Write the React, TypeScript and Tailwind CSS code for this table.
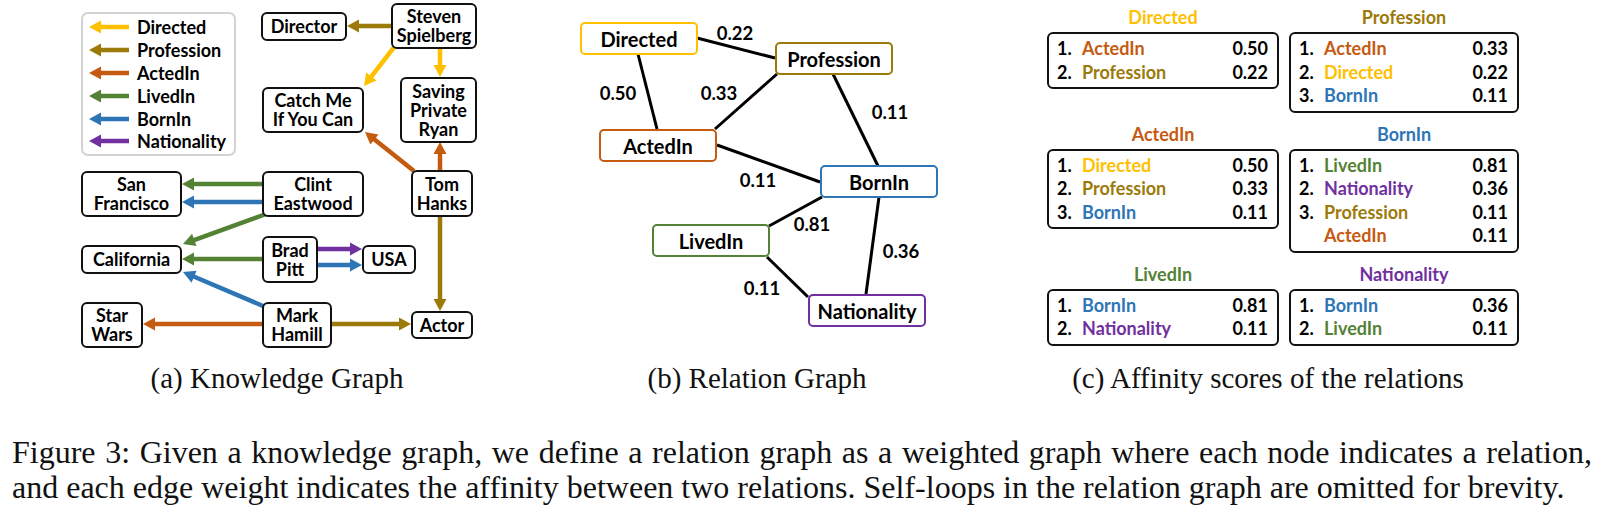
import React from 'react';

const C = {
  directed: '#FFC000',
  profession: '#9C7A0A',
  acted: '#C55A11',
  lived: '#548235',
  born: '#2E75B6',
  nat: '#7030A0',
};

type ArrowProps = { x1: number; y1: number; x2: number; y2: number; color: string };

function Arrow({ x1, y1, x2, y2, color }: ArrowProps) {
  const hl = 12;
  const hw = 6.5;
  const dx = x2 - x1;
  const dy = y2 - y1;
  const L = Math.hypot(dx, dy);
  const ux = dx / L;
  const uy = dy / L;
  const bx = x2 - ux * hl;
  const by = y2 - uy * hl;
  const px = -uy;
  const py = ux;
  return (
    <g>
      <line x1={x1} y1={y1} x2={bx + ux} y2={by + uy} stroke={color} strokeWidth={4.5} />
      <polygon
        points={`${x2},${y2} ${bx + px * hw},${by + py * hw} ${bx - px * hw},${by - py * hw}`}
        fill={color}
      />
    </g>
  );
}

const kgArrows: ArrowProps[] = [
  { x1: 391, y1: 26, x2: 347, y2: 26, color: C.profession },
  { x1: 395, y1: 46, x2: 364, y2: 86, color: C.directed },
  { x1: 440, y1: 48, x2: 440, y2: 77, color: C.directed },
  { x1: 414, y1: 171, x2: 365, y2: 132, color: C.acted },
  { x1: 440, y1: 170, x2: 440, y2: 142, color: C.acted },
  { x1: 440, y1: 216, x2: 440, y2: 311, color: C.profession },
  { x1: 262, y1: 184, x2: 182, y2: 184, color: C.lived },
  { x1: 262, y1: 202, x2: 182, y2: 202, color: C.born },
  { x1: 266, y1: 214, x2: 183, y2: 244, color: C.lived },
  { x1: 262, y1: 259, x2: 182, y2: 259, color: C.lived },
  { x1: 318, y1: 249, x2: 362, y2: 249, color: C.nat },
  { x1: 318, y1: 265, x2: 362, y2: 265, color: C.born },
  { x1: 263, y1: 306, x2: 183, y2: 272, color: C.born },
  { x1: 262, y1: 324, x2: 143, y2: 324, color: C.acted },
  { x1: 332, y1: 324, x2: 411, y2: 324, color: C.profession },
];

const kgNodes: { label: string[]; cls: string }[] = [
  { label: ['Director'], cls: 'left-[261px] top-[12px] w-[86px] h-[29px]' },
  { label: ['Steven', 'Spielberg'], cls: 'left-[391px] top-[3px] w-[86px] h-[46px]' },
  { label: ['Catch Me', 'If You Can'], cls: 'left-[262px] top-[87px] w-[102px] h-[46px]' },
  { label: ['Saving', 'Private', 'Ryan'], cls: 'left-[400px] top-[77px] w-[77px] h-[66px]' },
  { label: ['San', 'Francisco'], cls: 'left-[81px] top-[171px] w-[101px] h-[46px]' },
  { label: ['Clint', 'Eastwood'], cls: 'left-[262px] top-[171px] w-[102px] h-[46px]' },
  { label: ['Tom', 'Hanks'], cls: 'left-[411px] top-[170px] w-[62px] h-[47px]' },
  { label: ['California'], cls: 'left-[81px] top-[245px] w-[101px] h-[29px]' },
  { label: ['Brad', 'Pitt'], cls: 'left-[262px] top-[236px] w-[56px] h-[47px]' },
  { label: ['USA'], cls: 'left-[362px] top-[245px] w-[54px] h-[29px]' },
  { label: ['Star', 'Wars'], cls: 'left-[81px] top-[302px] w-[62px] h-[46px]' },
  { label: ['Mark', 'Hamill'], cls: 'left-[262px] top-[302px] w-[70px] h-[46px]' },
  { label: ['Actor'], cls: 'left-[411px] top-[311px] w-[62px] h-[28px]' },
];

const legend = [
  { name: 'Directed', color: C.directed },
  { name: 'Profession', color: C.profession },
  { name: 'ActedIn', color: C.acted },
  { name: 'LivedIn', color: C.lived },
  { name: 'BornIn', color: C.born },
  { name: 'Nationality', color: C.nat },
];

const rgNodes: { label: string; cls: string }[] = [
  { label: 'Directed', cls: 'left-[26px] top-[22px] border-[#FFC000]' },
  { label: 'Profession', cls: 'left-[221px] top-[42px] border-[#9C7A0A]' },
  { label: 'ActedIn', cls: 'left-[45px] top-[129px] border-[#C55A11]' },
  { label: 'BornIn', cls: 'left-[266px] top-[165px] border-[#2E75B6]' },
  { label: 'LivedIn', cls: 'left-[98px] top-[224px] border-[#548235]' },
  { label: 'Nationality', cls: 'left-[254px] top-[294px] border-[#7030A0]' },
];

const rgEdges = [
  [697, 38, 775, 58],
  [638, 54, 657, 129],
  [777, 74, 715, 129],
  [833, 74, 878, 166],
  [717, 145, 820, 182],
  [822, 197, 769, 226],
  [879, 197, 866, 294],
  [767, 257, 808, 297],
];

const rgLabels: { v: string; cls: string }[] = [
  { v: '0.22', cls: 'left-[181px] top-[33px]' },
  { v: '0.50', cls: 'left-[64px] top-[93px]' },
  { v: '0.33', cls: 'left-[165px] top-[93px]' },
  { v: '0.11', cls: 'left-[336px] top-[112px]' },
  { v: '0.11', cls: 'left-[204px] top-[180px]' },
  { v: '0.81', cls: 'left-[258px] top-[224px]' },
  { v: '0.36', cls: 'left-[347px] top-[251px]' },
  { v: '0.11', cls: 'left-[208px] top-[288px]' },
];

type Row = { n: string; name: string; cls: string; v: string };
const tables: { title: string; cls: string; rows: Row[] }[] = [
  {
    title: 'Directed',
    cls: 'text-[#FFC000]',
    rows: [
      { n: '1.', name: 'ActedIn', cls: 'text-[#C55A11]', v: '0.50' },
      { n: '2.', name: 'Profession', cls: 'text-[#9C7A0A]', v: '0.22' },
    ],
  },
  {
    title: 'Profession',
    cls: 'text-[#9C7A0A]',
    rows: [
      { n: '1.', name: 'ActedIn', cls: 'text-[#C55A11]', v: '0.33' },
      { n: '2.', name: 'Directed', cls: 'text-[#FFC000]', v: '0.22' },
      { n: '3.', name: 'BornIn', cls: 'text-[#2E75B6]', v: '0.11' },
    ],
  },
  {
    title: 'ActedIn',
    cls: 'text-[#C55A11]',
    rows: [
      { n: '1.', name: 'Directed', cls: 'text-[#FFC000]', v: '0.50' },
      { n: '2.', name: 'Profession', cls: 'text-[#9C7A0A]', v: '0.33' },
      { n: '3.', name: 'BornIn', cls: 'text-[#2E75B6]', v: '0.11' },
    ],
  },
  {
    title: 'BornIn',
    cls: 'text-[#2E75B6]',
    rows: [
      { n: '1.', name: 'LivedIn', cls: 'text-[#548235]', v: '0.81' },
      { n: '2.', name: 'Nationality', cls: 'text-[#7030A0]', v: '0.36' },
      { n: '3.', name: 'Profession', cls: 'text-[#9C7A0A]', v: '0.11' },
      { n: '', name: 'ActedIn', cls: 'text-[#C55A11]', v: '0.11' },
    ],
  },
  {
    title: 'LivedIn',
    cls: 'text-[#548235]',
    rows: [
      { n: '1.', name: 'BornIn', cls: 'text-[#2E75B6]', v: '0.81' },
      { n: '2.', name: 'Nationality', cls: 'text-[#7030A0]', v: '0.11' },
    ],
  },
  {
    title: 'Nationality',
    cls: 'text-[#7030A0]',
    rows: [
      { n: '1.', name: 'BornIn', cls: 'text-[#2E75B6]', v: '0.36' },
      { n: '2.', name: 'LivedIn', cls: 'text-[#548235]', v: '0.11' },
    ],
  },
];

function KnowledgeGraph() {
  return (
    <div className="relative h-[361px]">
      <svg className="absolute inset-0" width="554" height="361" viewBox="0 0 554 361">
        {kgArrows.map((a, i) => (
          <Arrow key={i} {...a} />
        ))}
      </svg>
      <div className="absolute left-[81px] top-[12px] w-[155px] h-[144px] border-2 border-[#d3d3d3] rounded-[7px] bg-white pl-[6px] pt-[2px] flex flex-col">
        {legend.map((l) => (
          <div key={l.name} className="flex items-center h-[22.8px] gap-[8px]">
            <svg width="40" height="14" viewBox="0 0 40 14">
              <line x1="11" y1="7" x2="40" y2="7" stroke={l.color} strokeWidth="4.5" />
              <polygon points="0,7 12,0.5 12,13.5" fill={l.color} />
            </svg>
            <span className="text-[18px] leading-[20px]">{l.name}</span>
          </div>
        ))}
      </div>
      {kgNodes.map((n) => (
        <div
          key={n.label.join(' ')}
          className={`absolute ${n.cls} border-2 border-[#111] rounded-[6px] bg-white flex flex-col items-center justify-center text-center text-[18px] leading-[19px]`}
        >
          {n.label.map((t) => (
            <span key={t}>{t}</span>
          ))}
        </div>
      ))}
    </div>
  );
}

function RelationGraph() {
  return (
    <div className="relative h-[361px]">
      <svg className="absolute inset-0" width="406" height="361" viewBox="554 0 406 361">
        {rgEdges.map((e, i) => (
          <line key={i} x1={e[0]} y1={e[1]} x2={e[2]} y2={e[3]} stroke="#000" strokeWidth="3" />
        ))}
      </svg>
      {rgNodes.map((n) => (
        <div
          key={n.label}
          className={`absolute ${n.cls} w-[118px] h-[33px] border-2 rounded-[5px] bg-white flex items-center justify-center text-[20px] leading-[22px]`}
        >
          {n.label}
        </div>
      ))}
      {rgLabels.map((l, i) => (
        <div
          key={i}
          className={`absolute ${l.cls} -translate-x-1/2 -translate-y-1/2 text-[18.5px] leading-[20px]`}
        >
          {l.v}
        </div>
      ))}
    </div>
  );
}

function Affinity() {
  return (
    <div className="h-[361px] pt-[5px] pl-[87px]">
      <div className="grid grid-cols-[232px_230px] gap-x-[10px] gap-y-[9px]">
        {tables.map((t) => (
          <div key={t.title}>
            <div className={`h-[24px] leading-[24px] text-center text-[18px] mb-[3px] ${t.cls}`}>{t.title}</div>
            <div className="border-2 border-[#111] rounded-[6px] py-[3px] pl-[8px] pr-[9px]">
              {t.rows.map((r, i) => (
                <div key={i} className="flex items-center h-[23.5px] text-[18px] leading-[23.5px]">
                  <span className="w-[25px]">{r.n}</span>
                  <span className={`flex-1 ${r.cls}`}>{r.name}</span>
                  <span>{r.v}</span>
                </div>
              ))}
            </div>
          </div>
        ))}
      </div>
    </div>
  );
}

export default function App() {
  return (
    <div className="w-[1600px] h-[514px] bg-white overflow-hidden text-black">
      <div className="flex font-['Lato',sans-serif] font-bold">
        <div className="w-[554px] shrink-0">
          <KnowledgeGraph />
        </div>
        <div className="w-[406px] shrink-0">
          <RelationGraph />
        </div>
        <div className="w-[616px] shrink-0">
          <Affinity />
        </div>
      </div>
      <div className="flex font-['Liberation_Serif',serif] text-[29px] leading-[34px] text-[#111]">
        <div className="w-[554px] shrink-0 text-center">(a) Knowledge Graph</div>
        <div className="w-[406px] shrink-0 text-center">(b) Relation Graph</div>
        <div className="w-[616px] shrink-0 text-center">(c) Affinity scores of the relations</div>
      </div>
      <div className="mt-[40px] ml-[12px] w-[1580px] font-['Liberation_Serif',serif] text-[32px] leading-[35px] text-[#111]">
        <p className="text-justify [text-align-last:justify] whitespace-nowrap">
          Figure 3: Given a knowledge graph, we define a relation graph as a weighted graph where each node indicates a relation,
        </p>
        <p className="whitespace-nowrap">
          and each edge weight indicates the affinity between two relations. Self-loops in the relation graph are omitted for brevity.
        </p>
      </div>
    </div>
  );
}
